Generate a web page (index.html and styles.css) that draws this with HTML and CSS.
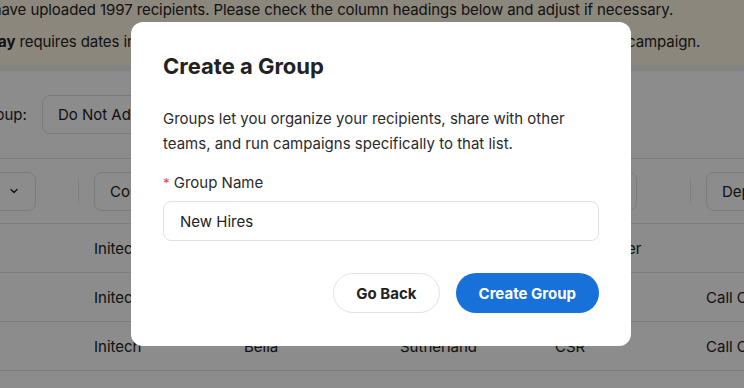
FILE: index.html
```html
<!DOCTYPE html>
<html lang="en">

<head>
    <meta charset="UTF-8" />
    <meta name="viewport" content="width=device-width, initial-scale=1.0" />
    <title>Upload Recipients</title>
    <link rel="stylesheet" href="styles.css">
</head>

<body>
    <div class="page">
        <div class="notice">
            <p class="notice-line first">You have uploaded 1997 recipients. Please check the column headings below and adjust if necessary.</p>
            <p class="notice-line second"><strong>Birthday</strong> requires dates in the MM/DD/YYYY format, before it can be used as a custom field in a campaign.</p>
        </div>

        <div class="content">
            <div class="group-row">
                <span class="group-label">Add to Group:</span>
                <div class="select group-select">Do Not Add to a Group
                    <svg class="chevron" width="12" height="12" viewBox="0 0 12 12"><path d="M3 4.5l3 3 3-3" fill="none" stroke="#222" stroke-width="1.4" stroke-linecap="round" stroke-linejoin="round"/></svg>
                </div>
            </div>

            <div class="table">
                <div class="row head">
                    <div class="cell"><div class="select w-95">Last
                        <svg class="chevron" width="12" height="12" viewBox="0 0 12 12"><path d="M3 4.5l3 3 3-3" fill="none" stroke="#222" stroke-width="1.4" stroke-linecap="round" stroke-linejoin="round"/></svg>
                    </div><span class="divider"></span></div>
                    <div class="cell"><div class="select w-110">Company
                        <svg class="chevron" width="12" height="12" viewBox="0 0 12 12"><path d="M3 4.5l3 3 3-3" fill="none" stroke="#222" stroke-width="1.4" stroke-linecap="round" stroke-linejoin="round"/></svg>
                    </div><span class="divider"></span></div>
                    <div class="cell"><div class="select w-110">First
                        <svg class="chevron" width="12" height="12" viewBox="0 0 12 12"><path d="M3 4.5l3 3 3-3" fill="none" stroke="#222" stroke-width="1.4" stroke-linecap="round" stroke-linejoin="round"/></svg>
                    </div><span class="divider"></span></div>
                    <div class="cell"><div class="select w-110">Last
                        <svg class="chevron" width="12" height="12" viewBox="0 0 12 12"><path d="M3 4.5l3 3 3-3" fill="none" stroke="#222" stroke-width="1.4" stroke-linecap="round" stroke-linejoin="round"/></svg>
                    </div><span class="divider"></span></div>
                    <div class="cell"><div class="select w-82">Title
                        <svg class="chevron" width="12" height="12" viewBox="0 0 12 12"><path d="M3 4.5l3 3 3-3" fill="none" stroke="#222" stroke-width="1.4" stroke-linecap="round" stroke-linejoin="round"/></svg>
                    </div><span class="divider"></span></div>
                    <div class="cell"><div class="select w-130">Department
                        <svg class="chevron" width="12" height="12" viewBox="0 0 12 12"><path d="M3 4.5l3 3 3-3" fill="none" stroke="#222" stroke-width="1.4" stroke-linecap="round" stroke-linejoin="round"/></svg>
                    </div></div>
                </div>

                <div class="row">
                    <div class="cell">Smith</div>
                    <div class="cell">Initech</div>
                    <div class="cell">Peter</div>
                    <div class="cell">Gibbons</div>
                    <div class="cell">Call Handler</div>
                    <div class="cell"></div>
                </div>
                <div class="row">
                    <div class="cell">Jones</div>
                    <div class="cell">Initech</div>
                    <div class="cell">Samir</div>
                    <div class="cell">Nagheenanajar</div>
                    <div class="cell">CSR</div>
                    <div class="cell">Call Center</div>
                </div>
                <div class="row">
                    <div class="cell">Brown</div>
                    <div class="cell">Initech</div>
                    <div class="cell">Bella</div>
                    <div class="cell">Sutherland</div>
                    <div class="cell">CSR</div>
                    <div class="cell">Call Center</div>
                </div>
                <div class="row">
                    <div class="cell"></div>
                    <div class="cell"></div>
                    <div class="cell"></div>
                    <div class="cell"></div>
                    <div class="cell"></div>
                    <div class="cell"></div>
                </div>
            </div>
        </div>
    </div>

    <div class="overlay">
        <div class="modal">
            <h2 class="modal-title">Create a Group</h2>
            <p class="modal-text">Groups let you organize your recipients, share with other teams, and run campaigns specifically to that list.</p>

            <label class="field-label"><span class="required">*</span> Group Name</label>
            <div class="text-input">New Hires</div>

            <div class="modal-actions">
                <button class="btn btn-secondary">Go Back</button>
                <button class="btn btn-primary">Create Group</button>
            </div>
        </div>
    </div>
</body>

</html>
```

FILE: styles.css
```css
body {
    margin: 0;
    font-family: Inter, 'Noto Sans', sans-serif;
    background-color: #ffffff;
    color: #222;
    overflow: hidden;
}

.page {
    width: 744px;
    height: 388px;
    overflow: hidden;
}

/* top notice */
.notice {
    background-color: #fff6e3;
    height: 65px;
    border-bottom: 6px solid #f1f1f1;
    font-size: 15px;
    color: #222;
}

.notice-line {
    margin: 0;
    white-space: nowrap;
    letter-spacing: -0.1px;
}

.notice-line.first {
    padding-top: 1px;
    margin-left: -38px;
    line-height: 18px;
}

.notice-line.second {
    margin-top: 14px;
    margin-left: -46px;
    line-height: 18px;
}

.notice-line strong {
    font-weight: 700;
}

/* group picker */
.group-row {
    display: flex;
    align-items: center;
    gap: 15px;
    height: 87px;
    margin-left: -72px;
    border-bottom: 1px solid #e3e3e3;
    font-size: 15px;
}

.select {
    display: flex;
    align-items: center;
    justify-content: space-between;
    box-sizing: border-box;
    height: 39px;
    padding: 0 15px;
    border: 1px solid #e1e1e1;
    border-radius: 8px;
    background: #fff;
    font-size: 15px;
    color: #222;
    white-space: nowrap;
}

.group-select {
    width: 220px;
}

.chevron {
    flex-shrink: 0;
    margin-left: 10px;
}

/* mapping table */
.table {
    margin-left: -59px;
    font-size: 15px;
}

.row {
    display: grid;
    grid-template-columns: 153px 150px 156px 155px 151px 153px;
    height: 48px;
    align-items: center;
    border-bottom: 1px solid #e3e3e3;
}

.row.head {
    height: 64px;
}

.cell {
    white-space: nowrap;
    overflow: hidden;
}

.head .cell {
    display: flex;
    align-items: center;
    justify-content: space-between;
    padding-right: 15px;
    overflow: visible;
}

.divider {
    width: 1px;
    height: 24px;
    background: #e6e6e6;
}

.w-82 { width: 82px; }
.w-95 { width: 95px; }
.w-110 { width: 110px; }
.w-130 { width: 130px; flex-shrink: 0; }

/* modal */
.overlay {
    position: fixed;
    inset: 0;
    background: rgba(0, 0, 0, 0.45);
    display: flex;
    align-items: flex-start;
    padding: 22px 0 0 131px;
}

.modal {
    width: 500px;
    height: 324px;
    box-sizing: border-box;
    padding: 30px 32px 33px;
    background: #fff;
    border-radius: 12px;
    display: flex;
    flex-direction: column;
}

.modal-title {
    margin: 0;
    font-size: 22px;
    font-weight: 700;
    color: #222;
    line-height: 28px;
}

.modal-text {
    margin: 26px 0 0;
    font-size: 15px;
    line-height: 25px;
    color: #2b2b2b;
}

.field-label {
    margin-top: 17px;
    font-size: 15px;
    line-height: 20px;
    color: #2b2b2b;
}

.required {
    color: #e5484d;
    font-size: 13px;
}

.text-input {
    margin-top: 8px;
    height: 40px;
    box-sizing: border-box;
    padding: 0 16px;
    display: flex;
    align-items: center;
    border: 1px solid #e1e1e1;
    border-radius: 8px;
    font-size: 15px;
    color: #222;
}

.modal-actions {
    margin-top: auto;
    display: flex;
    justify-content: flex-end;
    gap: 16px;
}

.btn {
    height: 40px;
    padding: 0 22px;
    border-radius: 20px;
    font-family: inherit;
    font-size: 15px;
    font-weight: 700;
    cursor: pointer;
}

.btn-secondary {
    background: #fff;
    border: 1px solid #e3e3e3;
    color: #222;
}

.btn-primary {
    padding: 0 23px;
    background: #1870d9;
    border: none;
    color: #fff;
}
```
